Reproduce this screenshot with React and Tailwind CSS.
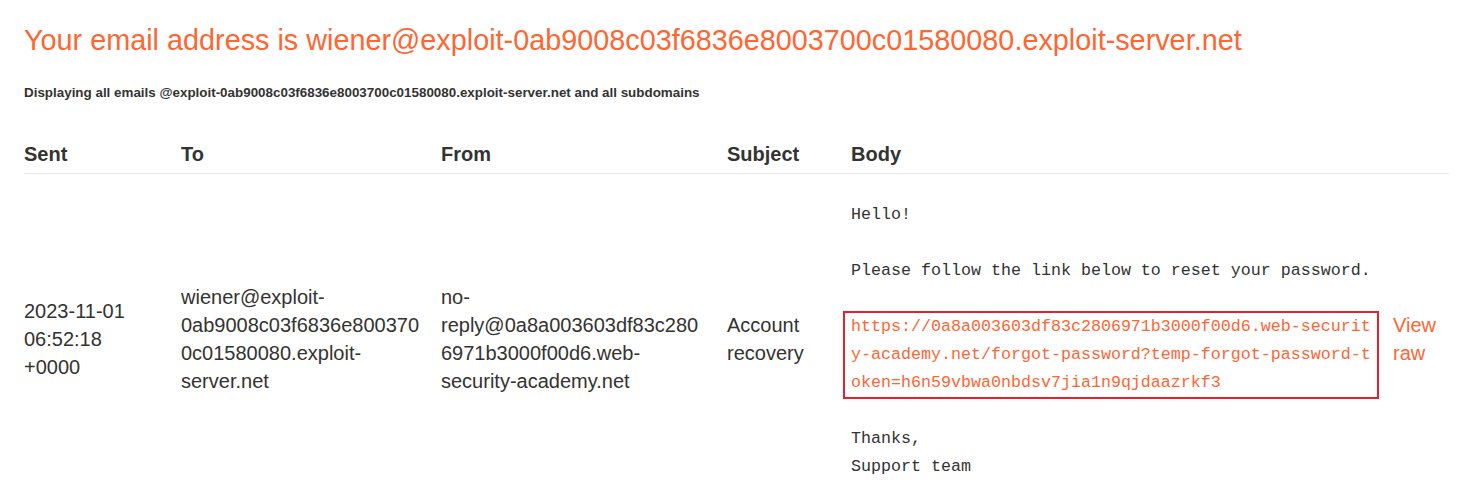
export default function App() {
  return (
    <div className="min-h-screen bg-white px-6 pt-[22px] font-['Liberation_Sans',Arial,sans-serif] text-[#333332]">
      {/* Title */}
      <h1 className="text-[28.8px] leading-[36px] font-normal text-[#ff6633]">
        Your email address is wiener@exploit-0ab9008c03f6836e8003700c01580080.exploit-server.net
      </h1>
      <h4 className="mt-[27px] text-[13.4px] leading-[16px] font-bold text-[#333332]">
        Displaying all emails @exploit-0ab9008c03f6836e8003700c01580080.exploit-server.net and all subdomains
      </h4>

      {/* Emails */}
      <table className="mt-[39px] w-[1425px] table-fixed border-collapse text-[20px] leading-[28px]">
        <colgroup>
          <col className="w-[157px]" />
          <col className="w-[260px]" />
          <col className="w-[286px]" />
          <col className="w-[124px]" />
          <col className="w-[542px]" />
          <col className="w-[56px]" />
        </colgroup>
        <thead>
          <tr className="border-b border-[#e6e6e6]">
            <th className="pb-[5px] text-left font-bold">Sent</th>
            <th className="pb-[5px] text-left font-bold">To</th>
            <th className="pb-[5px] text-left font-bold">From</th>
            <th className="pb-[5px] text-left font-bold">Subject</th>
            <th className="pb-[5px] text-left font-bold">Body</th>
            <th className="pb-[5px]"></th>
          </tr>
        </thead>
        <tbody>
          <tr>
            <td className="align-middle">
              2023-11-01<br />06:52:18<br />+0000
            </td>
            <td className="align-middle">
              wiener@exploit-<br />0ab9008c03f6836e800370<br />0c01580080.exploit-<br />server.net
            </td>
            <td className="align-middle">
              no-<br />reply@0a8a003603df83c280<br />6971b3000f00d6.web-<br />security-academy.net
            </td>
            <td className="align-middle">
              Account<br />recovery
            </td>
            <td className="pt-[27px] pb-[22px] align-middle">
              <div className="font-['Liberation_Mono',monospace] text-[16.67px] leading-[28px] text-[#333]">
                <div>Hello!</div>
                <div>&nbsp;</div>
                <div>Please follow the link below to reset your password.</div>
                <div>&nbsp;</div>
                <div className="-my-[2px] -ml-[8px] w-[536px] border-2 border-[#e8202a] pl-[6px]">
                  <a className="text-[#ff6633]">
                    https://0a8a003603df83c2806971b3000f00d6.web-securit<br />
                    y-academy.net/forgot-password?temp-forgot-password-t<br />
                    oken=h6n59vbwa0nbdsv7jia1n9qjdaazrkf3
                  </a>
                </div>
                <div>&nbsp;</div>
                <div>Thanks,</div>
                <div>Support team</div>
              </div>
            </td>
            <td className="align-middle">
              <a className="text-[#ff6633]">View<br />raw</a>
            </td>
          </tr>
        </tbody>
      </table>
    </div>
  );
}
